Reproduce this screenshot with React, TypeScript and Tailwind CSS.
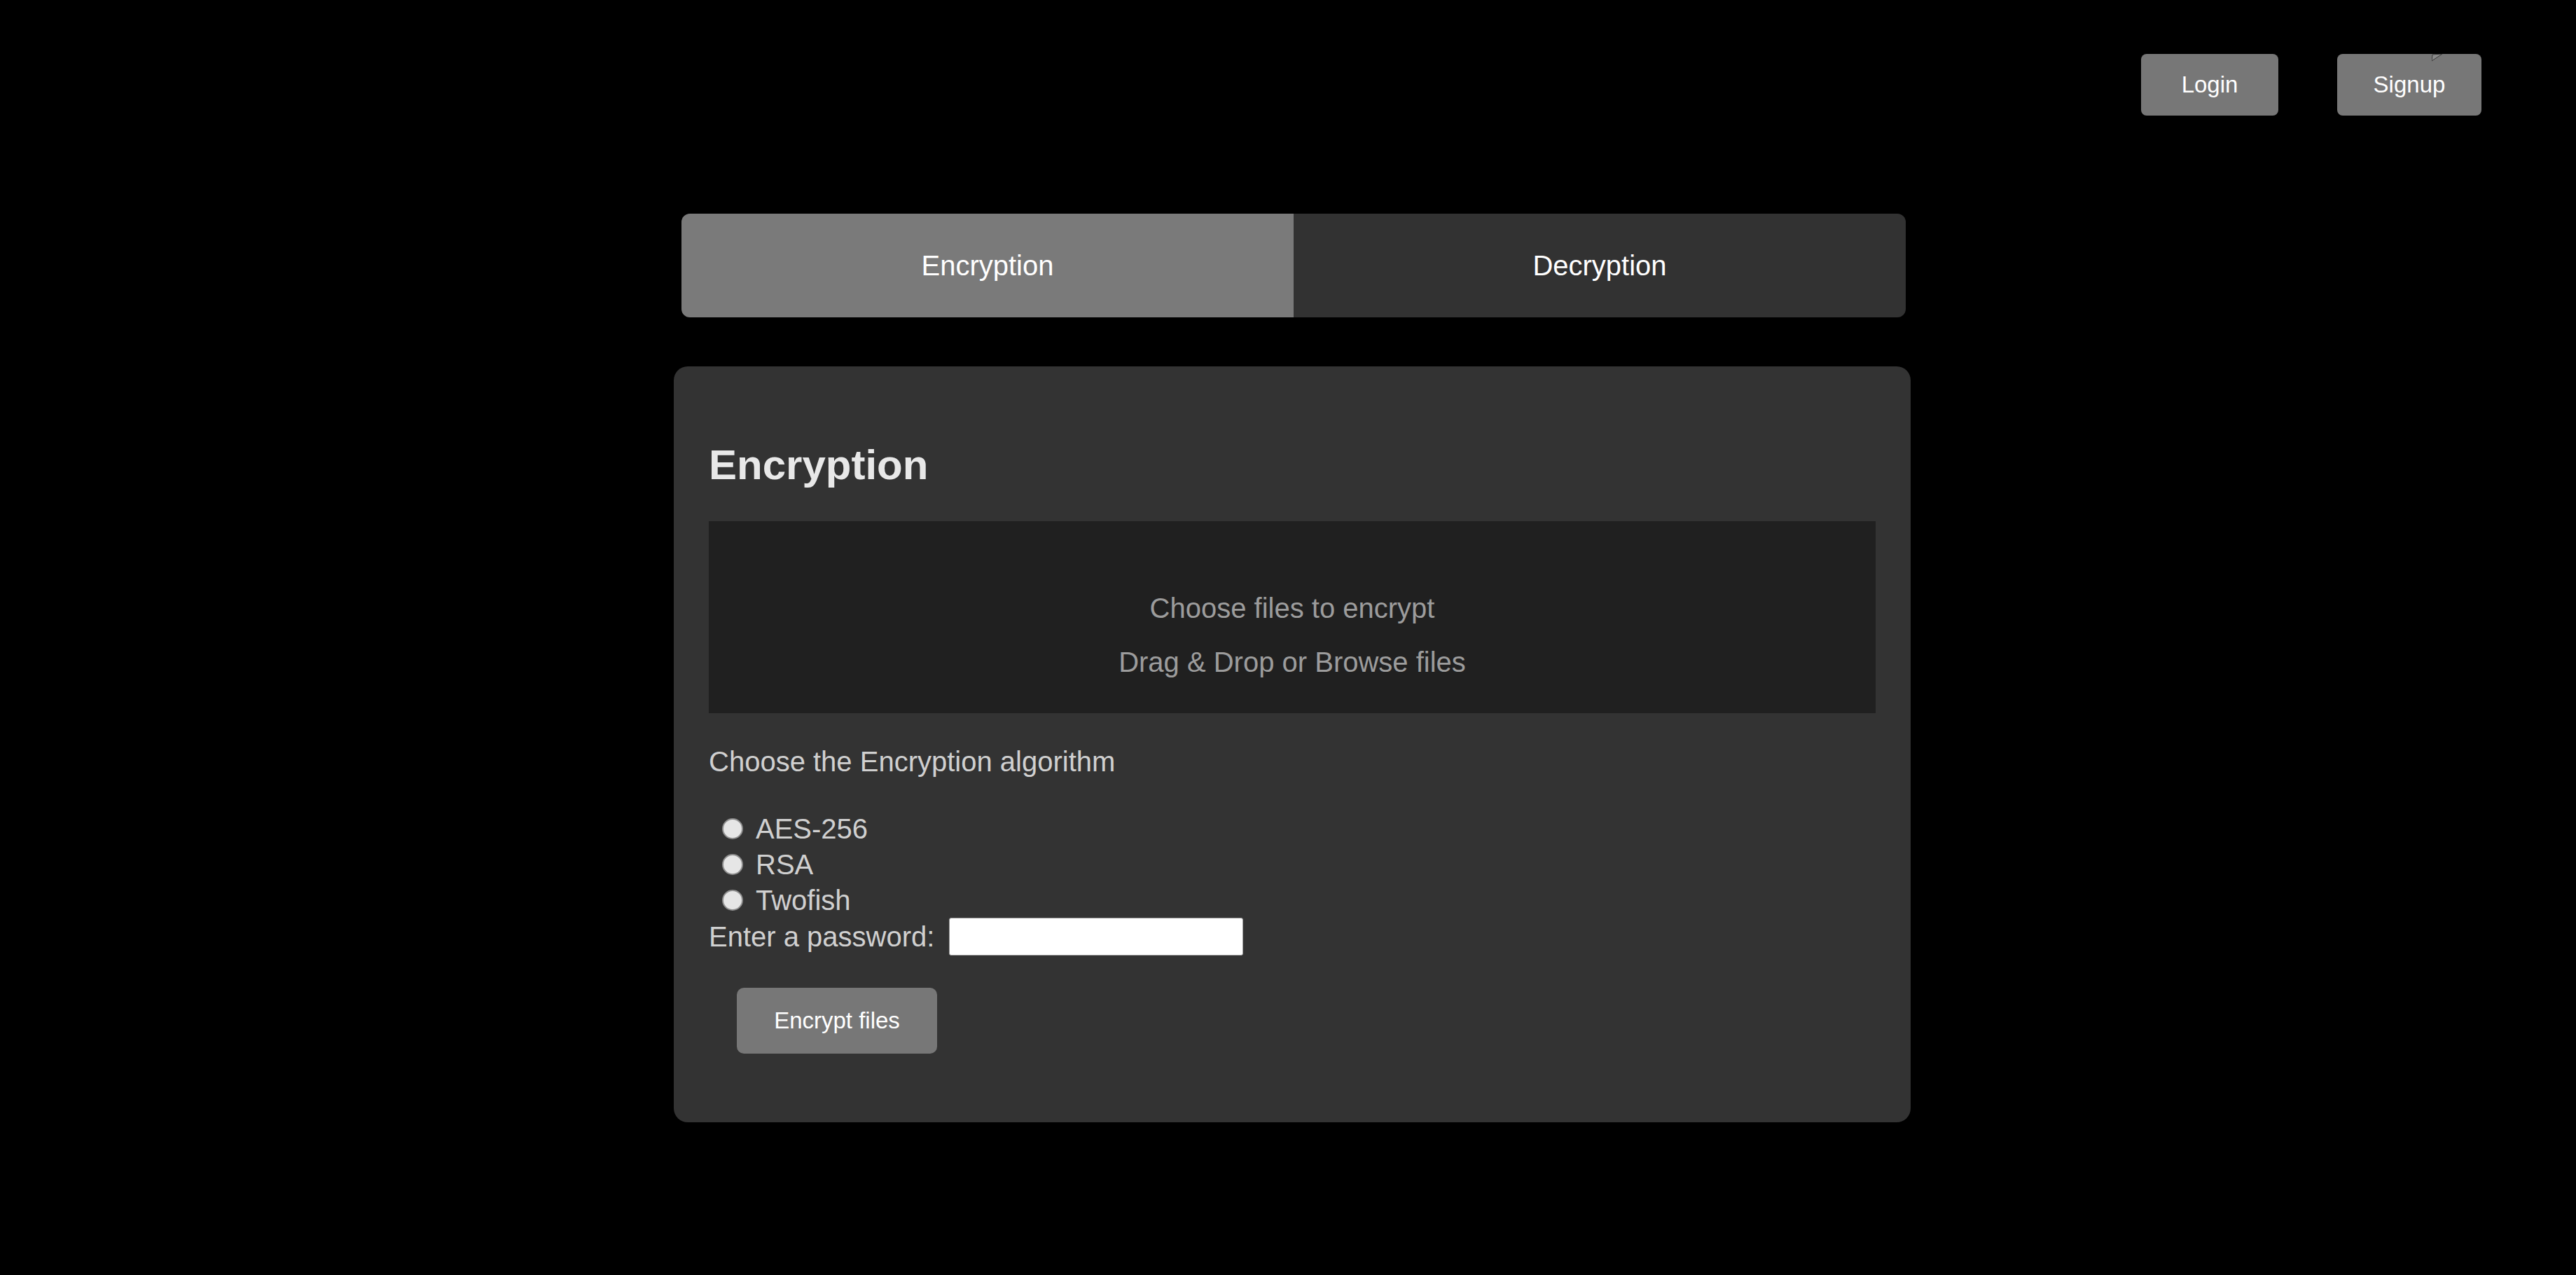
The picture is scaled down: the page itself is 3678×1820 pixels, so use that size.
import { useState } from "react";

const algorithms = ["AES-256", "RSA", "Twofish"];

function NavButton({ label, width }: { label: string; width: string }) {
  return (
    <button
      type="button"
      className={`${width} h-[88px] rounded-[8px] bg-[#777777] text-[33px] text-white`}
    >
      {label}
    </button>
  );
}

export default function App() {
  const [tab, setTab] = useState<"encrypt" | "decrypt">("encrypt");
  const [algo, setAlgo] = useState<string | null>(null);

  return (
    <div className="relative min-h-screen w-full bg-black font-['Liberation_Sans',Arial,sans-serif]">
      <header className="flex justify-end gap-[84px] pr-[135px] pt-[77px]">
        <NavButton label="Login" width="w-[196px]" />
        <NavButton label="Signup" width="w-[206px]" />
      </header>

      <main className="ml-[962px] w-[1766px]">
        <div className="ml-[11px] mt-[140px] flex h-[148px] w-[1748px] overflow-hidden rounded-[12px]">
          <button
            type="button"
            onClick={() => setTab("encrypt")}
            className={`flex-1 text-[40px] text-white ${
              tab === "encrypt" ? "bg-[#7a7a7a]" : "bg-[#323232]"
            }`}
          >
            Encryption
          </button>
          <button
            type="button"
            onClick={() => setTab("decrypt")}
            className={`flex-1 text-[40px] text-white ${
              tab === "decrypt" ? "bg-[#7a7a7a]" : "bg-[#323232]"
            }`}
          >
            Decryption
          </button>
        </div>

        <section className="mt-[70px] h-[1079px] rounded-[20px] bg-[#333333] px-[50px] pt-[107px]">
          <h2 className="h-[67px] text-[60px] font-bold leading-[67px] text-[#e8e8e8]">
            {tab === "encrypt" ? "Encryption" : "Decryption"}
          </h2>

          <div className="mt-[47px] flex h-[274px] flex-col items-center bg-[#202020] pt-[101px] text-[40px] leading-[46px] text-[#9c9c9c]">
            <p>Choose files to {tab === "encrypt" ? "encrypt" : "decrypt"}</p>
            <p className="mt-[31px]">Drag &amp; Drop or Browse files</p>
          </div>

          <p className="mt-[46px] text-[40px] leading-[46px] text-[#d0d0d0]">
            Choose the Encryption algorithm
          </p>

          <div className="mt-[47px]">
            {algorithms.map((a) => (
              <label
                key={a}
                className="flex h-[51px] cursor-pointer items-center text-[40px] text-[#d0d0d0]"
              >
                <span
                  onClick={() => setAlgo(a)}
                  className={`ml-[19px] h-[30px] w-[30px] rounded-full border-2 border-[#8f8f8f] ${
                    algo === a ? "bg-[#5a8dee]" : "bg-[#e6e6e6]"
                  }`}
                />
                <span className="ml-[18px]">{a}</span>
              </label>
            ))}
            <div className="flex h-[53px] items-center text-[40px] text-[#d0d0d0]">
              <span>Enter a password:</span>
              <input
                type="password"
                className="ml-[21px] h-[54px] w-[420px] rounded-[3px] border border-[#9a9a9a] bg-white px-2 text-[33px] text-black outline-none"
              />
            </div>
          </div>

          <button
            type="button"
            className="ml-[40px] mt-[47px] h-[94px] w-[286px] rounded-[10px] bg-[#777777] text-[33px] text-white"
          >
            Encrypt files
          </button>
        </section>
      </main>

      <svg
        className="absolute left-[3472px] top-[77px]"
        width="16"
        height="12"
        viewBox="0 0 16 12"
      >
        <polygon points="1,1 15,0 0,10" fill="#8a8a8a" stroke="#3a3a3a" strokeWidth="1" />
      </svg>
    </div>
  );
}
